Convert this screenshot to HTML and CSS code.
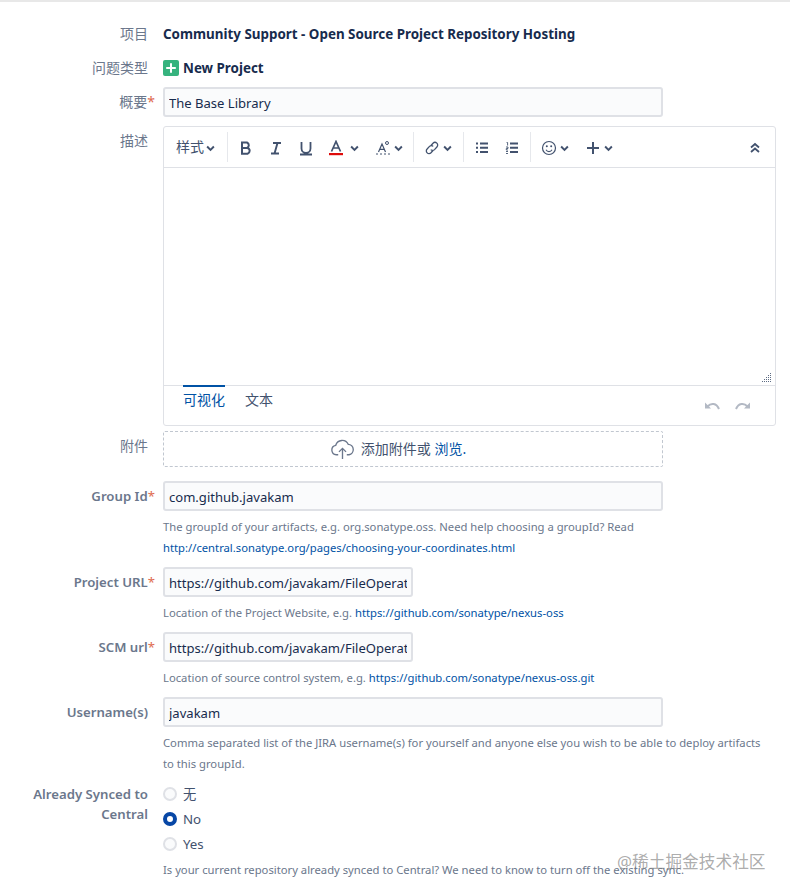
FILE: index.html
```html
<!DOCTYPE html>
<html lang="zh">
<head>
<meta charset="utf-8">
<title>Create issue</title>
<link rel="stylesheet" href="styles.css">
</head>
<body>
<form class="form">
  <div class="row row-project">
    <div class="label">项目</div>
    <div class="field strong">Community Support - Open Source Project Repository Hosting</div>
  </div>
  <div class="row row-type">
    <div class="label">问题类型</div>
    <div class="field strong type">
      <svg class="type-icon" viewBox="0 0 16 16"><rect width="16" height="16" rx="2" fill="#36b37e"/><path d="M8 3.2v9.6M3.2 8h9.6" stroke="#fff" stroke-width="2"/></svg>
      New Project
    </div>
  </div>
  <div class="row row-summary">
    <div class="label">概要<span class="req">*</span></div>
    <div class="field"><input class="input wide" value="The Base Library"></div>
  </div>
  <div class="row row-desc">
    <div class="label label-desc">描述</div>
    <div class="field">
      <div class="editor">
        <div class="toolbar">
          <div class="tgroup first">
            <span class="tbtn style">样式<svg class="chev" viewBox="0 0 8 6"><path d="M1 1.2l3 3 3-3"/></svg></span>
          </div>
          <div class="tgroup g-text">
            <svg class="ic" viewBox="0 0 16 16"><path d="M4 2.5h5a3 3 0 0 1 0 5.5H4zM4 8h5.6a3 3 0 0 1 0 5.7H4z" fill="none" stroke="#42526e" stroke-width="2"/></svg>
            <svg class="ic" viewBox="0 0 16 16"><path d="M5 3h8M3 13.5h8M9.5 3l-3 10.5" fill="none" stroke="#42526e" stroke-width="1.9"/></svg>
            <svg class="ic" viewBox="0 0 16 16"><path d="M3.5 2v6.5a4.5 4.5 0 0 0 9 0V2M2 14.5h12" fill="none" stroke="#42526e" stroke-width="1.8"/></svg>
            <span class="color color-a">
              <svg class="ic" viewBox="0 0 16 16"><path d="M3.5 11.5L8 1.5l4.5 10M5 8h6" fill="none" stroke="#42526e" stroke-width="1.7"/><rect x="1" y="13" width="14" height="2.2" fill="#de0b0b"/></svg>
              <svg class="chev" viewBox="0 0 8 6"><path d="M1 1.2l3 3 3-3"/></svg>
            </span>
            <span class="color color-b">
              <svg class="ic" viewBox="0 0 16 16"><path d="M3.5 12L7 4l3.5 8M4.8 9.3h4.4M1 14h2M5 14h2M9 14h2M13 14h2" fill="none" stroke="#42526e" stroke-width="1.2"/><circle cx="12" cy="3" r="1.5" fill="none" stroke="#42526e"/></svg>
              <svg class="chev" viewBox="0 0 8 6"><path d="M1 1.2l3 3 3-3"/></svg>
            </span>
          </div>
          <div class="tgroup g-link">
            <span class="color">
              <svg class="ic" viewBox="0 0 16 16"><path d="M7 5.5l2-2.3a2.7 2.7 0 0 1 3.9 3.8L10.5 9.6a2.6 2.6 0 0 1-3.7 0M9 10.5l-2 2.3a2.7 2.7 0 0 1-3.9-3.8L5.5 6.4a2.6 2.6 0 0 1 3.7 0" fill="none" stroke="#42526e" stroke-width="1.3"/></svg>
              <svg class="chev" viewBox="0 0 8 6"><path d="M1 1.2l3 3 3-3"/></svg>
            </span>
          </div>
          <div class="tgroup g-list">
            <svg class="ic" viewBox="0 0 16 16"><path d="M6 3.5h8M6 7.8h8M6 12h8" stroke="#42526e" stroke-width="1.9"/><path d="M2 3.5h2M2 7.8h2M2 12h2" stroke="#42526e" stroke-width="1.9"/></svg>
            <svg class="ic" viewBox="0 0 16 16"><path d="M6 3.5h8M6 7.8h8M6 12h8" stroke="#42526e" stroke-width="1.9"/><path d="M2.6 2.5h1v3M2 7h2v1.5H2.3v1.5H4M2 11.5h2M2 13.5h2" fill="none" stroke="#42526e" stroke-width="0.9"/></svg>
          </div>
          <div class="tgroup g-insert">
            <span class="color">
              <svg class="ic" viewBox="0 0 16 16"><circle cx="8" cy="8" r="6.5" fill="none" stroke="#42526e" stroke-width="1.2"/><circle cx="5.8" cy="6.3" r="1" fill="#42526e"/><circle cx="10.2" cy="6.3" r="1" fill="#42526e"/><path d="M5 9.8a3.4 3.4 0 0 0 6 0" fill="none" stroke="#42526e" stroke-width="1.1"/></svg>
              <svg class="chev" viewBox="0 0 8 6"><path d="M1 1.2l3 3 3-3"/></svg>
            </span>
            <span class="color">
              <svg class="ic" viewBox="0 0 16 16"><path d="M8 2v12M2 8h12" stroke="#42526e" stroke-width="2"/></svg>
              <svg class="chev" viewBox="0 0 8 6"><path d="M1 1.2l3 3 3-3"/></svg>
            </span>
          </div>
          <svg class="collapse" viewBox="0 0 12 12"><path d="M2 5.5l4-3.5 4 3.5M2 10l4-3.5L10 10" fill="none" stroke="#42526e" stroke-width="1.8"/></svg>
        </div>
        <div class="canvas">
          <svg class="grip" viewBox="0 0 10 10"><g fill="#5e6c84"><rect x="8" y="0" width="1" height="1"/><rect x="6" y="2" width="1" height="1"/><rect x="8" y="2" width="1" height="1"/><rect x="4" y="4" width="1" height="1"/><rect x="6" y="4" width="1" height="1"/><rect x="8" y="4" width="1" height="1"/><rect x="2" y="6" width="1" height="1"/><rect x="4" y="6" width="1" height="1"/><rect x="6" y="6" width="1" height="1"/><rect x="8" y="6" width="1" height="1"/><rect x="0" y="8" width="1" height="1"/><rect x="2" y="8" width="1" height="1"/><rect x="4" y="8" width="1" height="1"/><rect x="6" y="8" width="1" height="1"/><rect x="8" y="8" width="1" height="1"/></g></svg>
        </div>
        <div class="tabs">
          <span class="tab active">可视化</span>
          <span class="tab">文本</span>
          <span class="undo">
            <svg class="ur" viewBox="0 0 15 8"><path d="M0 .5v6h6z" fill="#b3b9c4"/><path d="M2.5 4.5C6 .6 11.5 1 14 7" fill="none" stroke="#b3b9c4" stroke-width="2"/></svg>
            <svg class="ur" viewBox="0 0 15 8"><path d="M15 .5v6H9z" fill="#b3b9c4"/><path d="M12.5 4.5C9 .6 3.5 1 1 7" fill="none" stroke="#b3b9c4" stroke-width="2"/></svg>
          </span>
        </div>
      </div>
    </div>
  </div>
  <div class="row row-attach">
    <div class="label label-attach">附件</div>
    <div class="field">
      <div class="drop">
        <svg class="cloud" viewBox="0 0 26 22"><path d="M8.5 16.5H6.5a5 5 0 0 1-.6-9.9A7 7 0 0 1 19 5.6a5.5 5.5 0 0 1 .8 10.9h-2.3" fill="none" stroke="#6b778c" stroke-width="1.4"/><path d="M13 21V10M9.3 13.5L13 9.8l3.7 3.7" fill="none" stroke="#6b778c" stroke-width="1.4"/></svg>
        <span class="drop-text">添加附件或 <a class="link" href="#">浏览.</a></span>
      </div>
    </div>
  </div>
  <div class="row row-group">
    <div class="label label-b">Group Id<span class="req">*</span></div>
    <div class="field">
      <input class="input wide" value="com.github.javakam">
      <div class="hint">The groupId of your artifacts, e.g. org.sonatype.oss. Need help choosing a groupId? Read<br><a class="link" href="#">http://central.sonatype.org/pages/choosing-your-coordinates.html</a></div>
    </div>
  </div>
  <div class="row row-next">
    <div class="label label-b">Project URL<span class="req">*</span></div>
    <div class="field">
      <input class="input narrow" value="https://github.com/javakam/FileOperator">
      <div class="hint">Location of the Project Website, e.g. <a class="link" href="#">https://github.com/sonatype/nexus-oss</a></div>
    </div>
  </div>
  <div class="row row-next">
    <div class="label label-b">SCM url<span class="req">*</span></div>
    <div class="field">
      <input class="input narrow" value="https://github.com/javakam/FileOperator">
      <div class="hint">Location of source control system, e.g. <a class="link" href="#">https://github.com/sonatype/nexus-oss.git</a></div>
    </div>
  </div>
  <div class="row row-next">
    <div class="label label-b">Username(s)</div>
    <div class="field">
      <input class="input wide" value="javakam">
      <div class="hint">Comma separated list of the JIRA username(s) for yourself and anyone else you wish to be able to deploy artifacts<br>to this groupId.</div>
    </div>
  </div>
  <div class="row row-sync">
    <div class="label label-b label-sync">Already Synced to Central</div>
    <div class="field">
      <div class="radio"><span class="dot"></span>无</div>
      <div class="radio"><span class="dot on"></span>No</div>
      <div class="radio"><span class="dot"></span>Yes</div>
      <div class="hint hint-sync">Is your current repository already synced to Central? We need to know to turn off the existing sync.</div>
    </div>
  </div>
</form>
<div class="watermark">@稀土掘金技术社区</div>
</body>
</html>
```

FILE: styles.css
```css
* { box-sizing: border-box; }
html, body { margin: 0; padding: 0; }
body {
  width: 790px;
  height: 896px;
  overflow: hidden;
  background: #fff;
  color: #172b4d;
  font-family: "Noto Sans", "Noto Sans CJK SC", sans-serif;
  font-size: 14px;
  position: relative;
  border-top: 2px solid #e8e8e8;
}
.form { padding-top: 22px; }
.row { display: flex; align-items: flex-start; }
.label {
  width: 148px;
  flex: none;
  margin-right: 15px;
  text-align: right;
  color: #6b778c;
  font-size: 14px;
  line-height: 20px;
}
.label-b { font-weight: 600; font-size: 13.2px; }
.req { color: #de6a50; font-weight: 400; margin-right: -7px; }
.field { flex: none; }
.strong { font-weight: 700; font-size: 13.4px; line-height: 20px; color: #172b4d; }
.row-type { margin-top: 14px; }
.type { display: flex; align-items: center; gap: 4px; }
.type-icon { width: 16px; height: 16px; }
.row-summary { margin-top: 9px; }
.row-summary .label { padding-top: 5px; }
.input {
  display: block;
  height: 30px;
  border: 2px solid #dfe1e6;
  border-radius: 3px;
  background: #fafbfc;
  color: #172b4d;
  font: inherit;
  font-size: 13.05px;
  padding: 2px 4px 0;
  outline: none;
}
.wide { width: 500px; }
.narrow { width: 250px; }
.row-desc { margin-top: 9px; }
.label-desc { padding-top: 5px; }
.editor {
  width: 613px;
  height: 300px;
  border: 1px solid #dfe1e6;
  border-radius: 3px;
  display: flex;
  flex-direction: column;
}
.toolbar {
  height: 41px;
  flex: none;
  display: flex;
  align-items: center;
  border-bottom: 1px solid #dfe1e6;
  padding: 5px 12px 5px 0;
}
.tgroup {
  display: flex;
  align-items: center;
  height: 30px;
  padding-top: 2px;
  border-right: 1px solid #e6e8ec;
}
.first { width: 64px; padding-left: 12px; }
.g-text { width: 186px; padding-left: 10px; gap: 14px; }
.g-link { width: 50px; padding-left: 10px; }
.g-list { width: 67px; padding-left: 10px; gap: 14px; }
.g-insert { border-right: 0; padding-left: 10px; gap: 16px; }
.tbtn { display: flex; align-items: center; gap: 2px; color: #42526e; font-size: 14px; line-height: 20px; padding-bottom: 2px; }
.tbtn .chev { margin-top: 2px; }
.ic { width: 16px; height: 16px; flex: none; }
.chev { width: 9px; height: 7px; flex: none; }
.chev path { fill: none; stroke: #42526e; stroke-width: 1.7; }
.color { display: flex; align-items: center; gap: 3px; }
.color-a { gap: 6px; }
.color-b { margin-left: 2px; }
.collapse { width: 12px; height: 12px; margin-left: auto; margin-right: 2px; margin-top: 2px; }
.canvas { flex: 1; position: relative; }
.grip { position: absolute; right: 3px; bottom: 2px; width: 10px; height: 10px; }
.tabs {
  height: 40px;
  flex: none;
  display: flex;
  align-items: flex-start;
  gap: 20px;
  padding: 0 19px;
  border-top: 1px solid #dfe1e6;
}
.tab { color: #42526e; font-size: 14px; line-height: 20px; padding-top: 5px; margin-top: -1px; }
.tab.active { color: #0052a5; border-top: 2px solid #0052a5; padding-top: 3px; }
.undo { margin-left: auto; display: flex; gap: 15px; margin-right: 6px; margin-top: 16px; }
.ur { width: 15px; height: 8px; }
.row-attach { margin-top: 5px; }
.label-attach { padding-top: 5px; }
.drop {
  width: 500px;
  height: 36px;
  border: 1px dashed #c1c7d0;
  border-radius: 2px;
  display: flex;
  align-items: center;
  justify-content: center;
  gap: 6px;
  padding-right: 30px;
  color: #42526e;
  font-size: 14px;
}
.drop-text { margin-top: -2px; }
.cloud { width: 25px; height: 21px; }
.link { color: #0052a5; text-decoration: none; }
.row-group { margin-top: 14px; }
.row-group .label, .row-next .label { padding-top: 5px; }
.hint {
  color: #6b778c;
  font-size: 11.25px;
  line-height: 21px;
  margin-top: 5px;
  white-space: nowrap;
}
.row-next { margin-top: 9px; }
.row-sync { margin-top: 7px; }
.label-sync { line-height: 20px; padding-top: 3px; }
.radio {
  display: flex;
  align-items: center;
  gap: 6px;
  height: 25px;
  color: #42526e;
  font-size: 13.3px;
}
.dot {
  width: 14px;
  height: 14px;
  border-radius: 50%;
  background: #fafbfc;
  border: 2px solid #dfe1e6;
  flex: none;
}
.dot.on { background: #fff; border: 4px solid #0747a6; }
.hint-sync { margin-top: 3px; }
.watermark {
  position: absolute;
  left: 617px;
  top: 849px;
  color: rgba(120, 120, 120, 0.62);
  font-size: 16.7px;
  line-height: 22px;
  white-space: nowrap;
}
```
